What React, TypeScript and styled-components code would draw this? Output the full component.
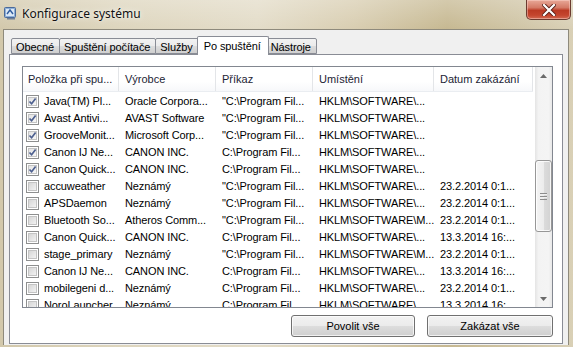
import React, { FC } from "react";
import styled, { createGlobalStyle } from "styled-components";

const GlobalStyle = createGlobalStyle`
  html, body {
    margin: 0;
    padding: 0;
    overflow: hidden;
    background: #d8cfb5;
  }
`;

// window frame + aero title bar
const Window = styled.div`
  width: 573px;
  height: 347px;
  display: flex;
  flex-direction: column;
  background:
    linear-gradient(180deg, rgba(255, 255, 255, 0.25) 0%, rgba(255, 255, 255, 0) 30px),
    linear-gradient(90deg, #d2c8ab 0%, #ddd5bd 20%, #e3dcc8 45%, #d8cdb0 62%, #c6b891 78%, #cfc4a4 90%, #d9d0b6 100%);
  font-family: "Liberation Sans", Arial, sans-serif;
  font-size: 11px;
  color: #000;
  box-sizing: border-box;
`;

const TitleBar = styled.div`
  height: 29px;
  display: flex;
  align-items: flex-start;
  flex-shrink: 0;
`;

const TitleIcon = styled.svg`
  margin: 6px 0 0 4px;
  flex-shrink: 0;
`;

const TitleText = styled.span`
  margin: 6px 0 0 5px;
  font-family: "Noto Sans", "Open Sans", sans-serif;
  font-size: 12px;
  line-height: 16px;
  color: #111;
  text-shadow: 0 0 6px rgba(255, 255, 255, 0.9), 0 0 2px rgba(255, 255, 255, 0.8);
`;

const CloseButton = styled.div`
  margin-left: auto;
  margin-right: 2px;
  width: 45px;
  height: 20px;
  box-sizing: border-box;
  border: 1px solid #6b3b30;
  border-top: none;
  border-radius: 0 0 5px 5px;
  background: linear-gradient(180deg, #e8a898 0%, #d47a66 40%, #bb3a24 55%, #c4452e 80%, #d26a52 100%);
  box-shadow: inset 0 0 0 1px rgba(255, 220, 210, 0.45);
  display: flex;
  align-items: center;
  justify-content: center;
`;

const Client = styled.div`
  flex: 1;
  margin: 0 4px 2px 3px;
  border: 1px solid #8e8a7c;
  border-bottom: none;
  background: #f0f0f0;
  display: flex;
  flex-direction: column;
  padding: 6px 5px 1px 5px;
  min-height: 0;
`;

const TabStrip = styled.div`
  display: flex;
  align-items: flex-end;
  height: 18px;
  padding-left: 3px;
  position: relative;
  z-index: 1;
`;

const Tab = styled.div<{ active?: boolean }>`
  box-sizing: border-box;
  height: ${p => (p.active ? "19px" : "16px")};
  margin: ${p => (p.active ? "0 -2px -1px -2px" : "0 0 0 -1px")};
  padding: ${p => (p.active ? "0 7px 0 6px" : "0 5px 0 4px")};
  border: 1px solid #898c95;
  border-bottom: ${p => (p.active ? "none" : "1px solid #898c95")};
  border-radius: 2px 2px 0 0;
  background: ${p =>
    p.active ? "#fff" : "linear-gradient(180deg, #f2f2f2 0%, #ebebeb 50%, #dddddd 51%, #cfcfcf 100%)"};
  display: flex;
  align-items: center;
  padding-top: ${p => (p.active ? "0" : "1px")};
  position: relative;
  z-index: ${p => (p.active ? 2 : 1)};
  white-space: nowrap;
  letter-spacing: -0.1px;
`;

const TabPage = styled.div`
  flex: 1;
  background: #fff;
  border: 1px solid #898c95;
  display: flex;
  flex-direction: column;
  padding: 11px 9px 6px 12px;
  min-height: 0;
`;

const ListBox = styled.div`
  height: 241px;
  border: 1px solid #828790;
  display: flex;
  background: #fff;
  overflow: hidden;
`;

const ListContent = styled.div`
  flex: 1;
  display: flex;
  flex-direction: column;
  min-width: 0;
`;

const COLS = "96px 97px 97px 121px 99px";

const HeaderRow = styled.div`
  display: grid;
  grid-template-columns: ${COLS};
  height: 24px;
  flex-shrink: 0;
  background: linear-gradient(180deg, #ffffff 0%, #ffffff 60%, #f7f8fa 100%);
  border-bottom: 1px solid #eaedf1;
`;

const HeaderCell = styled.div<{ pad?: number }>`
  border-right: 1px solid #e3e5e8;
  display: flex;
  align-items: center;
  padding-left: ${p => p.pad ?? 6}px;
  color: #1c2434;
  white-space: nowrap;
  overflow: hidden;
`;

const Rows = styled.div`
  flex: 1;
  overflow: hidden;
  padding-top: 1px;
`;

const Row = styled.div`
  display: grid;
  grid-template-columns: ${COLS};
  height: 17px;
  align-items: center;
`;

const Cell = styled.div<{ first?: boolean }>`
  display: flex;
  align-items: center;
  padding-left: ${p => (p.first ? 3 : 6)}px;
  white-space: nowrap;
  line-height: 17px;
  letter-spacing: -0.1px;
`;

const CheckBox = styled.div<{ checked?: boolean }>`
  width: 13px;
  height: 13px;
  box-sizing: border-box;
  border: 1px solid #8e8f8f;
  background: #fff;
  margin-right: 5px;
  flex-shrink: 0;
  display: flex;
  align-items: center;
  justify-content: center;
  &::before {
    content: "";
    width: 9px;
    height: 9px;
    box-sizing: border-box;
    border: 1px solid #c4c4c4;
    background: ${p =>
      p.checked
        ? "linear-gradient(135deg, #e4e4e4 0%, #f6f6f6 100%)"
        : "linear-gradient(135deg, #d6d6d6 0%, #f2f2f2 100%)"};
  }
  position: relative;
`;

const CheckMark = styled.svg`
  position: absolute;
  left: 1px;
  top: 1px;
`;

const ScrollBar = styled.div`
  width: 17px;
  margin-left: 2px;
  display: flex;
  flex-direction: column;
  background: linear-gradient(90deg, #e4e4e4 0%, #f3f3f3 20%, #f4f4f4 80%, #e8e8e8 100%);
  flex-shrink: 0;
`;

const ArrowButton = styled.div`
  height: 17px;
  display: flex;
  align-items: center;
  justify-content: center;
  flex-shrink: 0;
`;

const Thumb = styled.div`
  margin-top: 76px;
  height: 72px;
  box-sizing: border-box;
  border: 1px solid #979797;
  border-radius: 3px;
  background: linear-gradient(90deg, #f4f4f4 0%, #ececec 50%, #dcdcdc 51%, #d2d2d2 100%);
  box-shadow: inset 0 0 0 1px rgba(255, 255, 255, 0.8);
  display: flex;
  align-items: center;
  justify-content: center;
`;

const Grip = styled.div`
  width: 7px;
  height: 7px;
  background: repeating-linear-gradient(180deg, #8d8d8d 0px, #8d8d8d 1px, #f0f0f0 1px, #f0f0f0 2px, transparent 2px, transparent 3px);
`;

const ScrollSpacer = styled.div`
  flex: 1;
`;

const ButtonRow = styled.div`
  display: flex;
  justify-content: flex-end;
  gap: 12px;
  margin-top: 7px;
`;

const Button = styled.div<{ w: number }>`
  width: ${p => p.w}px;
  height: 22px;
  box-sizing: border-box;
  border: 1px solid #707070;
  border-radius: 3px;
  background: linear-gradient(180deg, #f2f2f2 0%, #ebebeb 50%, #dddddd 51%, #cfcfcf 100%);
  box-shadow: inset 0 0 0 1px rgba(255, 255, 255, 0.7);
  display: flex;
  align-items: center;
  justify-content: center;
  color: #000;
`;

type Item = {
  on: boolean;
  name: string;
  maker: string;
  cmd: string;
  loc: string;
  date: string;
};

const items: Item[] = [
  { on: true, name: "Java(TM) Pl...", maker: "Oracle Corpora...", cmd: "\"C:\\Program Fil...", loc: "HKLM\\SOFTWARE\\...", date: "" },
  { on: true, name: "Avast Antivi...", maker: "AVAST Software", cmd: "\"C:\\Program Fil...", loc: "HKLM\\SOFTWARE\\...", date: "" },
  { on: true, name: "GrooveMonit...", maker: "Microsoft Corp...", cmd: "\"C:\\Program Fil...", loc: "HKLM\\SOFTWARE\\...", date: "" },
  { on: true, name: "Canon IJ Ne...", maker: "CANON INC.", cmd: "C:\\Program Fil...", loc: "HKLM\\SOFTWARE\\...", date: "" },
  { on: true, name: "Canon Quick...", maker: "CANON INC.", cmd: "C:\\Program Fil...", loc: "HKLM\\SOFTWARE\\...", date: "" },
  { on: false, name: "accuweather", maker: "Neznámý", cmd: "\"C:\\Program Fil...", loc: "HKLM\\SOFTWARE\\...", date: "23.2.2014 0:1..." },
  { on: false, name: "APSDaemon", maker: "Neznámý", cmd: "\"C:\\Program Fil...", loc: "HKLM\\SOFTWARE\\...", date: "23.2.2014 0:1..." },
  { on: false, name: "Bluetooth So...", maker: "Atheros Comm...", cmd: "\"C:\\Program Fil...", loc: "HKLM\\SOFTWARE\\M...", date: "23.2.2014 0:1..." },
  { on: false, name: "Canon Quick...", maker: "CANON INC.", cmd: "C:\\Program Fil...", loc: "HKLM\\SOFTWARE\\...", date: "13.3.2014 16:..." },
  { on: false, name: "stage_primary", maker: "Neznámý", cmd: "\"C:\\Program Fil...", loc: "HKLM\\SOFTWARE\\M...", date: "23.2.2014 0:1..." },
  { on: false, name: "Canon IJ Ne...", maker: "CANON INC.", cmd: "C:\\Program Fil...", loc: "HKLM\\SOFTWARE\\...", date: "13.3.2014 16:..." },
  { on: false, name: "mobilegeni d...", maker: "Neznámý", cmd: "C:\\Program Fil...", loc: "HKLM\\SOFTWARE\\...", date: "23.2.2014 0:1..." },
  { on: false, name: "NoroLauncher", maker: "Neznámý", cmd: "C:\\Program Fil...", loc: "HKLM\\SOFTWARE\\...", date: "13.3.2014 16:..." },
];

const tabs = ["Obecné", "Spuštění počítače", "Služby", "Po spuštění", "Nástroje"];

const App: FC = () => {
  return (
    <>
      <GlobalStyle />
      <Window>
        <TitleBar>
          <TitleIcon width="13" height="14" viewBox="0 0 13 14">
            <rect x="0.5" y="1.5" width="11" height="10" rx="1" fill="#8fb0d8" stroke="#4a6a9a" />
            <rect x="2" y="3" width="8" height="7" fill="#dbe8f6" />
            <path d="M3 8 L6 4 L9 8" fill="none" stroke="#2f5c9e" strokeWidth="1.4" />
            <rect x="3" y="12" width="8" height="1.5" fill="#6f7f96" />
          </TitleIcon>
          <TitleText>Konfigurace systému</TitleText>
          <CloseButton>
            <svg width="14" height="12" viewBox="0 0 14 12">
              <path d="M2 1 L12 11 M12 1 L2 11" stroke="#5a2018" strokeWidth="4" strokeLinecap="square" />
              <path d="M2 1 L12 11 M12 1 L2 11" stroke="#ffffff" strokeWidth="2.2" strokeLinecap="square" />
            </svg>
          </CloseButton>
        </TitleBar>
        <Client>
          <TabStrip>
            {tabs.map(t => (
              <Tab key={t} active={t === "Po spuštění"}>
                {t}
              </Tab>
            ))}
          </TabStrip>
          <TabPage>
            <ListBox>
              <ListContent>
                <HeaderRow>
                  <HeaderCell pad={5}>Položka při spu...</HeaderCell>
                  <HeaderCell>Výrobce</HeaderCell>
                  <HeaderCell>Příkaz</HeaderCell>
                  <HeaderCell>Umístění</HeaderCell>
                  <HeaderCell>Datum zakázání</HeaderCell>
                </HeaderRow>
                <Rows>
                  {items.map((it, i) => (
                    <Row key={i}>
                      <Cell first>
                        <CheckBox checked={it.on}>
                          {it.on && (
                            <CheckMark width="9" height="9" viewBox="0 0 9 9">
                              <path d="M1.5 4.5 L3.6 6.8 L7.6 1.6" fill="none" stroke="#4c5f8f" strokeWidth="1.7" />
                            </CheckMark>
                          )}
                        </CheckBox>
                        {it.name}
                      </Cell>
                      <Cell>{it.maker}</Cell>
                      <Cell>{it.cmd}</Cell>
                      <Cell>{it.loc}</Cell>
                      <Cell>{it.date}</Cell>
                    </Row>
                  ))}
                </Rows>
              </ListContent>
              <ScrollBar>
                <ArrowButton>
                  <svg width="7" height="4" viewBox="0 0 7 4">
                    <path d="M0 4 L3.5 0 L7 4 Z" fill="#6a6a6a" />
                  </svg>
                </ArrowButton>
                <Thumb>
                  <Grip />
                </Thumb>
                <ScrollSpacer />
                <ArrowButton>
                  <svg width="7" height="4" viewBox="0 0 7 4">
                    <path d="M0 0 L3.5 4 L7 0 Z" fill="#6a6a6a" />
                  </svg>
                </ArrowButton>
              </ScrollBar>
            </ListBox>
            <ButtonRow>
              <Button w={124}>Povolit vše</Button>
              <Button w={126}>Zakázat vše</Button>
            </ButtonRow>
          </TabPage>
        </Client>
      </Window>
    </>
  );
};

export default App;
